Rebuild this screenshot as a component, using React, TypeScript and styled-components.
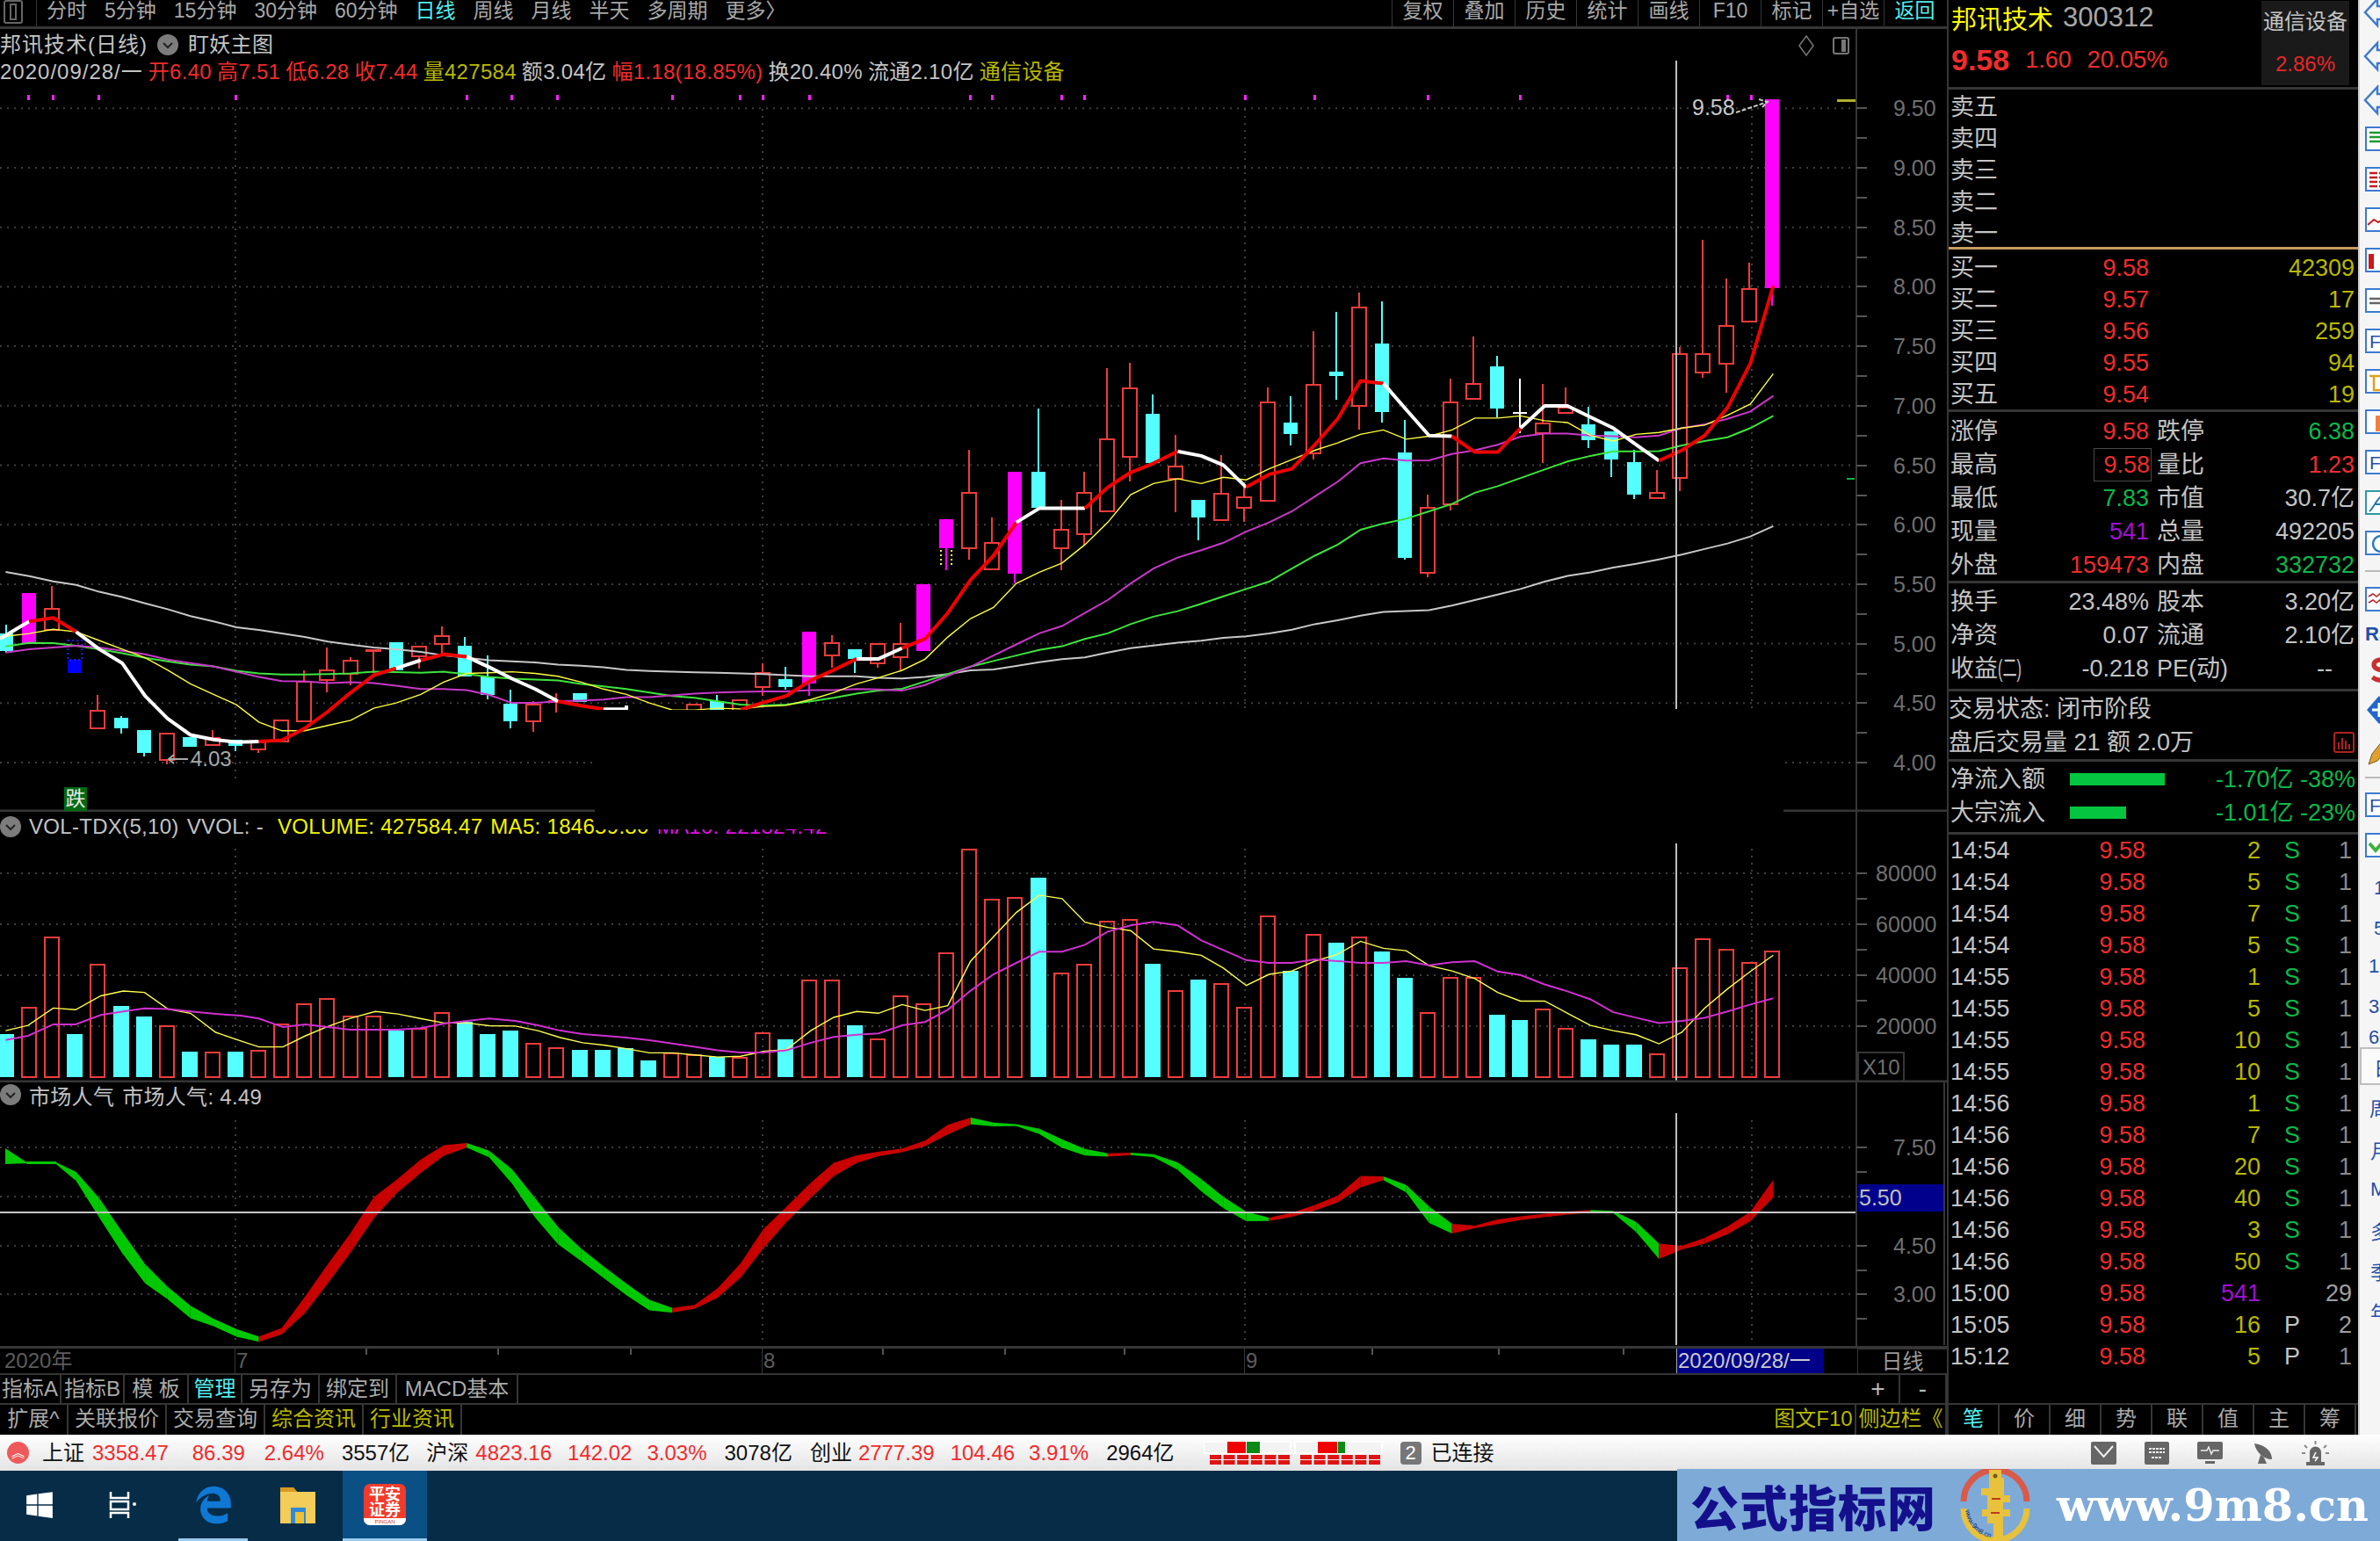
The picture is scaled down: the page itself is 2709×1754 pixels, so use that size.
import React from 'react';
import styled, { createGlobalStyle } from 'styled-components';
import { FaWindows, FaEdgeLegacy } from 'react-icons/fa';

const FONT = '"Liberation Sans", "Noto Sans CJK SC", sans-serif';
const RED = '#f02c2c';
const OLIVE = '#b8b800';
const GREEN = '#0cb84a';
const GREY = '#c4c4c4';
const LINE = '#363636';

const Global = createGlobalStyle`
  html, body { margin: 0; padding: 0; background: #000; overflow: hidden; }
  * { box-sizing: border-box; }
`;

const Screen = styled.div`
  width: 2709px; height: 1754px; display: flex; flex-direction: column;
  font-family: ${FONT}; background: #000; overflow: hidden;
`;
const Workspace = styled.div`display: flex; height: 1633px;`;
const ChartColumn = styled.div`width: 2216px; display: flex; flex-direction: column;`;

/* ---------- toolbar ---------- */
const Toolbar = styled.div`
  height: 33px; display: flex; align-items: flex-start; border-bottom: 3px solid ${LINE};
  font-size: 23px; line-height: 24px; color: #a8a8a8; white-space: nowrap;
`;
const ToolIconCell = styled.div`
  width: 42px; height: 30px; border-right: 1px solid ${LINE}; padding: 0 0 0 4px; display: flex; align-items: flex-start;
`;
const PeriodGroup = styled.div`display: flex; gap: 20px; padding-left: 11px;`;
const Period = styled.span<{ $on?: boolean }>`color: ${p => (p.$on ? '#55eeee' : '#a8a8a8')};`;
const ToolGroup = styled.div`margin-left: auto; display: flex; padding-right: 2px;`;
const ToolButton = styled.div<{ $on?: boolean }>`
  width: 70px; height: 30px; text-align: center; border-left: 1px solid ${LINE};
  color: ${p => (p.$on ? '#55eeee' : '#a8a8a8')};
`;

/* ---------- panes ---------- */
const Pane = styled.div<{ $h: number }>`position: relative; height: ${p => p.$h}px; flex: none;`;
const Canvas = styled.svg`display: block; width: 100%; height: 100%;`;
const ChartText = styled.text<{ $c?: string; $s?: number }>`
  font-family: ${FONT}; font-size: ${p => p.$s ?? 25}px; fill: ${p => p.$c ?? '#707070'};
`;
const HeaderStack = styled.div`
  position: absolute; left: 0; top: 2px; font-size: 24px; line-height: 31px; color: ${GREY}; white-space: nowrap;
`;
const HeaderRow = styled.div<{ $gap?: number }>`
  display: flex; align-items: center; gap: ${p => p.$gap ?? 6}px; height: 31px;
`;
const Seg = styled.span<{ $c?: string; $ls?: number }>`color: ${p => p.$c ?? GREY}; letter-spacing: ${p => p.$ls ?? 0.3}px;`;
const PaneTitle = styled.div<{ $top?: number }>`
  position: absolute; left: 0; top: ${p => p.$top ?? 3}px; height: 28px; display: flex; align-items: center; gap: 9px;
  font-size: 24px; color: ${GREY}; white-space: nowrap;
`;
const TitleMask = styled.div`
  position: absolute; left: 676px; top: 0; width: 310px; height: 17px; background: #000;
`;
const DropBadge = styled.div`
  position: absolute; left: 73px; top: 863px; width: 26px; height: 27px; background: #006a12; color: #e8e8e8;
  font-size: 23px; line-height: 27px; text-align: center;
`;

/* ---------- date axis and tabs ---------- */
const DateAxis = styled.div`
  position: relative; height: 31px; flex: none; border-top: 3px solid ${LINE}; display: flex; color: #5c5c5c;
  font-size: 24px; line-height: 27px;
`;
const AxisTicks = styled.svg`position: absolute; left: 0; top: 0; width: 2113px; height: 10px;`;
const DateCell = styled.div<{ $w: number; $bar?: boolean; $pad?: number }>`
  width: ${p => p.$w}px; padding-left: ${p => p.$pad ?? 1}px;
  border-right: 1px solid ${p => (p.$bar ? LINE : 'transparent')};
`;
const DateFlag = styled.div`
  width: 168px; background: #000088; color: #ccc; padding-left: 1px; font-size: 24px;
  border-left: 1px solid #aaa;
`;
const AxisCell = styled.div`
  width: 102px; margin-left: auto; text-align: center; color: #9a9a9a; border-left: 1px solid ${LINE}; border-top: 1px solid ${LINE};
`;
const TabRow = styled.div<{ $h: number }>`
  height: ${p => p.$h}px; flex: none; display: flex; border-top: 2px solid ${LINE}; font-size: 24px; line-height: 32px;
  white-space: nowrap;
`;
const Tab = styled.div<{ $w: number; $c?: string; $s?: number }>`
  width: ${p => p.$w}px; text-align: center; border-right: 2px solid ${LINE}; color: ${p => p.$c ?? '#aaa'};
  ${p => (p.$s ? `font-size: ${p.$s}px;` : '')}
`;
const TabSpacer = styled.div`flex: 1;`;

/* ---------- quote panel ---------- */
const QuotePanel = styled.div`
  width: 468px; border-left: 2px solid ${LINE}; display: flex; flex-direction: column;
  font-size: 27px; color: ${GREY}; white-space: nowrap; background: #000;
`;
const QuoteHead = styled.div`
  height: 102px; flex: none; border-bottom: 3px solid ${LINE}; display: flex; justify-content: space-between; padding: 1px 10px 0 3px;
`;
const HeadLeft = styled.div`display: flex; flex-direction: column;`;
const NameLine = styled.div`display: flex; align-items: center; gap: 11px; height: 38px; font-size: 29px; color: #ff0;`;
const CodeNum = styled.span`font-size: 31px; color: #a8a8a8;`;
const PriceLine = styled.div`display: flex; align-items: center; gap: 18px; height: 56px; margin-top: 1px; color: ${RED};`;
const BigPrice = styled.span`font-size: 34px; font-weight: 700;`;
const SectorBox = styled.div`
  width: 100px; height: 96px; background: #1a1a1a; display: flex; flex-direction: column; align-items: center;
  font-size: 24px; color: ${GREY}; padding-top: 4px; gap: 19px;
`;
const SectorPct = styled.span`color: #e42828;`;
const QuoteSection = styled.div<{ $h: number; $pad?: number; $accent?: boolean }>`
  height: ${p => p.$h}px; flex: none; padding-top: ${p => p.$pad ?? 2}px;
  border-bottom: ${p => (p.$accent ? '3px solid #c89a60' : `3px solid ${LINE}`)};
`;
const QuoteRow = styled.div<{ $h?: number }>`
  height: ${p => p.$h ?? 36}px; line-height: ${p => p.$h ?? 36}px; padding-left: 2px; display: grid;
  grid-template-columns: 108px 118px 109px 125px;
`;
const RowValue = styled.div<{ $c?: string; $box?: boolean; $inset?: number }>`
  position: relative; text-align: right; color: ${p => p.$c ?? GREY};
  padding-right: ${p => p.$inset ?? 0}px;
  ${p => (p.$box ? `outline: 1px solid #4a4a4a; outline-offset: -1px; margin-left: 55px; padding-right: 2px; margin-right: -3px;` : '')}
`;
const RowLabel2 = styled.div`padding-left: 9px;`;
const NarrowParen = styled.span`
  display: inline-block; width: 27px; white-space: nowrap;
  transform: scaleX(0.6); transform-origin: left center;
`;
const StatusLine = styled.div`height: 38px; line-height: 38px; padding-left: 0; display: flex; align-items: center; justify-content: space-between; padding-right: 4px;`;
const FlowRow = styled.div`height: 38px; line-height: 38px; padding-left: 2px; display: grid; grid-template-columns: 136px 1fr auto; align-items: center; padding-right: 3px;`;
const FlowBar = styled.div<{ $w: number }>`width: ${p => p.$w}px; height: 14px; background: #04c440;`;
const FlowValue = styled.div`color: ${GREEN};`;
const TradeRow = styled.div`
  height: 36px; line-height: 36px; padding-left: 2px; display: grid; grid-template-columns: 130px 92px 131px 60px 44px;
`;
const TradeVol = styled.div<{ $c: string }>`text-align: right; color: ${p => p.$c};`;
const TradeFlag = styled.div<{ $c: string }>`padding-left: 27px; color: ${p => p.$c};`;

/* ---------- tool rail ---------- */
const Rail = styled.div`
  width: 25px; flex: none; background: #f5f5f5; border-left: 2px solid #cfcfcf; overflow: hidden; display: flex; flex-direction: column;
`;
const RailSlot = styled.div<{ $h: number; $on?: boolean; $pad?: number }>`
  height: ${p => p.$h}px; flex: none; display: flex; align-items: center; padding-left: ${p => p.$pad ?? 6}px; width: 60px;
  font-size: 22px; color: #1f4fa8; white-space: nowrap;
  ${p => (p.$on ? 'background:#fafafa; border: 2px solid #bdbdbd; border-right: none;' : '')}
`;
const RailBox = styled.div<{ $c?: string }>`
  width: 28px; height: 28px; flex: none; border: 2px solid ${p => p.$c ?? '#3c7ad0'}; background: #fff;
  font-size: 22px; line-height: 24px; color: #1f4fa8;
`;
const RailRule = styled.div`width: 40px; height: 2px; background: #bbb;`;

/* ---------- status and task bars ---------- */
const StatusBar = styled.div`
  height: 41px; flex: none; display: flex; align-items: center; padding-left: 8px; font-size: 24px; color: #111;
  background: linear-gradient(#ffffff, #e4e4e4); white-space: nowrap; line-height: 36px;
`;
const StatusItem = styled.span<{ $ml: number; $c?: string }>`margin-left: ${p => p.$ml}px; color: ${p => p.$c ?? '#111'};`;
const StatusDot = styled.div`
  width: 25px; height: 25px; border-radius: 50%; background: #ee5a5a; color: #fff; font-size: 15px; line-height: 25px; text-align: center;
`;
const LineBadge = styled.div`
  margin-left: 20px; width: 24px; height: 26px; border-radius: 4px; background: #777; color: #fff; text-align: center; line-height: 26px; font-size: 22px;
`;
const TrayGroup = styled.div`margin-left: auto; display: flex; align-items: center; gap: 32px; padding-right: 58px; color: #666;`;
const Taskbar = styled.div`height: 80px; flex: none; display: flex; background: #062c47; position: relative;`;
const TaskSlot = styled.div<{ $w: number; $on?: boolean; $ul?: boolean; $ml?: number }>`
  width: ${p => p.$w}px; margin-left: ${p => p.$ml ?? 0}px; display: flex; align-items: center; justify-content: center; color: #fff;
  background: ${p => (p.$on ? '#0a5085' : 'transparent')};
  border-bottom: 3px solid ${p => (p.$ul ? '#9ccbee' : 'transparent')};
`;
const AppIcon = styled.div`
  width: 48px; height: 47px; border-radius: 7px; background: #f23a2c; color: #fff; font-size: 18px; line-height: 18px; font-weight: 700;
  text-align: center; padding-top: 3px; overflow: hidden; position: relative;
`;
const AppFoot = styled.div`
  position: absolute; left: 0; right: 0; bottom: 0; height: 8px; background: #fff; color: #c33; font-size: 6px; line-height: 8px; font-weight: 400;
`;
const Watermark = styled.div`
  margin-left: auto; margin-top: -2px; width: 800px; height: 82px; background: #7eaad8; display: flex; align-items: center;
  padding-left: 15px; position: relative; z-index: 2;
`;
const WatermarkCn = styled.div`
  font-family: "Noto Sans CJK SC", sans-serif; font-weight: 900; font-size: 55px; line-height: 78px; color: #14108c; letter-spacing: 1px; white-space: nowrap; width: 285px;
`;
const WatermarkUrl = styled.div`
  font-family: "DejaVu Serif", serif; font-weight: 700; font-size: 51px; color: #fff; white-space: nowrap; margin-left: 30px;
`;

/* ---------- chart data: real screen pixels ---------- */
const X = (i: number) => 7 + 26.1 * i;
type P = number[];
const z9 = (a: P[]) => a.map(([x, y]) => [x / 1.568, 640 + y / 2.529]);
const z10 = (a: P[]) => a.map(([x, y]) => [1000 + x / 1.307, 300 + y / 2.376]);
const zv = (a: P[]) => a.map(([x, y]) => [x / 1.568, 920 + y / 2.529]);
const zw = (a: P[]) => a.map(([x, y]) => [1000 + x / 1.307, 920 + y / 2.529]);
const ptsOf = (a: P[]) => a.map(p => `${p[0].toFixed(1)},${p[1].toFixed(1)}`).join(' ');

type Candle = [string, number, number, number?, number?];
const CANDLES: Candle[] = [
  ['c', 721, 741, 711, 743], ['m', 675, 733], ['r', 693, 717, 667, 717], ['b', 751, 766], ['r', 809, 829, 791, 829],
  ['c', 817, 829, 815, 835], ['c', 831, 857, 831, 861], ['r', 835, 865, 835, 870], ['c', 839, 850], ['r', 840, 848, 831, 848],
  ['c', 842, 849, 842, 855], ['r', 845, 853, 845, 857], ['r', 820, 844], ['r', 776, 821, 763, 821], ['r', 763, 774, 737, 788],
  ['r', 752, 767, 748, 780], ['r', 740, 741, 740, 766], ['c', 731, 763], ['r', 736, 747, 736, 761], ['r', 724, 733, 713, 744],
  ['c', 735, 770, 725, 770], ['c', 770, 791, 746, 796], ['c', 801, 821, 785, 829], ['r', 802, 821, 798, 833], ['r', 798, 799, 789, 811],
  ['c', 789, 799], ['n', 0, 0], ['n', 0, 0], ['n', 0, 0], ['n', 0, 0], ['r', 802, 812], ['c', 798, 808, 791, 808], ['r', 797, 812],
  ['r', 766, 782, 755, 792], ['c', 773, 782, 759, 785], ['m', 719, 778, 719, 792], ['r', 732, 746, 723, 760], ['c', 739, 750, 739, 766],
  ['r', 733, 755, 733, 760], ['r', 733, 748, 709, 763], ['m', 665, 741], ['m', 591, 624, 591, 649], ['r', 561, 624, 512, 637],
  ['r', 618, 648, 589, 648], ['m', 537, 653, 537, 664], ['c', 537, 578, 465, 578], ['r', 603, 624, 569, 649], ['r', 561, 608, 537, 620],
  ['r', 500, 582, 419, 582], ['r', 442, 520, 413, 548], ['c', 471, 527, 449, 527], ['r', 531, 545, 495, 583], ['c', 569, 589, 569, 615],
  ['r', 562, 592, 518, 592], ['r', 566, 578, 552, 594], ['r', 458, 570, 441, 570], ['c', 481, 494, 451, 507], ['r', 438, 516, 377, 523],
  ['c', 423, 428, 355, 455], ['r', 350, 462, 333, 489], ['c', 391, 469, 343, 481], ['c', 515, 635, 478, 637], ['r', 578, 652, 563, 657],
  ['r', 458, 574, 431, 581], ['r', 437, 454, 383, 454], ['c', 417, 465, 405, 475], ['w', 470, 471, 431, 493], ['r', 482, 493, 437, 527],
  ['r', 464, 470, 441, 470], ['c', 483, 501, 463, 510], ['c', 491, 523, 491, 543], ['c', 526, 563, 512, 568], ['r', 561, 567, 535, 568],
  ['r', 403, 544, 395, 559], ['r', 403, 424, 273, 430], ['r', 371, 414, 317, 447], ['r', 329, 366, 299, 366], ['m', 113, 328, 113, 348],
];
const VOL_TOPS: [string, number][] = ([
  ['c', 650], ['r', 575], ['r', 373], ['c', 650], ['r', 450], ['c', 570], ['c', 600], ['r', 627], ['c', 700], ['r', 702], ['c', 700], ['r', 697],
  ['r', 622], ['r', 565], ['r', 550], ['r', 600], ['r', 600], ['c', 640], ['r', 635], ['r', 590], ['c', 615], ['c', 650], ['c', 640], ['r', 677],
  ['r', 690], ['c', 695], ['c', 695], ['c', 690], ['c', 725], ['r', 705], ['r', 710], ['c', 715], ['r', 717], ['r', 647], ['c', 665], ['r', 495],
  ['r', 495], ['c', 625], ['r', 665], ['r', 540], ['r', 565], ['r', 418], ['r', 120], ['r', 262], ['r', 257], ['c', 200], ['r', 475], ['r', 450],
  ['r', 327], ['r', 322], ['c', 448], ['r', 525], ['c', 493], ['r', 505], ['r', 575], ['r', 312], ['c', 468], ['r', 363], ['c', 387], ['r', 373],
  ['c', 412], ['c', 488], ['r', 590], ['r', 488], ['r', 488], ['c', 595], ['c', 610], ['r', 580], ['r', 636], ['c', 665], ['c', 680], ['c', 680],
  ['r', 707], ['r', 460], ['r', 378], ['r', 408], ['r', 444], ['r', 413],
] as [string, number][]);

const MAIN_LINES: { c: string; w: number; p: number[][] }[] = [
  { c: '#c8c8c8', w: 2, p: [...z9([[10,28],[52,40],[95,55],[136,65],[177,85],[218,100],[259,118],[299,135],[340,155],[381,170],[422,187],[462,195],[503,205],[544,215],[585,228],[626,237],[667,245],[707,250],[751,258],[792,268],[833,275],[873,282],[914,285],[955,288],[996,295],[1037,298],[1077,302],[1118,310],[1159,313],[1200,315],[1240,317],[1281,318],[1322,320],[1362,322],[1403,325],[1447,328],[1488,328],[1529,328]]), ...z10([[0,1120],[35,1122],[69,1118],[103,1110],[137,1100],[171,1098],[205,1088],[239,1078],[273,1070],[307,1065],[341,1052],[375,1040],[409,1033],[445,1025],[480,1020],[513,1012],[547,1008],[581,1000],[615,990],[649,975],[683,965],[717,952],[751,942],[785,940],[819,937],[853,925],[887,910],[921,895],[955,880],[991,860],[1025,845],[1059,835],[1093,822],[1127,812],[1161,800],[1195,787],[1229,772],[1263,757],[1297,738],[1331,710]])] },
  { c: '#3ee43e', w: 2, p: [...z9([[10,242],[52,232],[95,233],[136,240],[177,250],[218,262],[259,275],[299,285],[340,295],[381,300],[422,312],[462,320],[503,323],[544,323],[585,322],[626,320],[667,315],[707,316],[751,318],[792,315],[833,322],[873,330],[914,335],[955,338],[996,340],[1037,350],[1077,357],[1118,365],[1159,375],[1200,385],[1240,390],[1281,400],[1322,410],[1362,412],[1403,410],[1447,400],[1488,390],[1529,378]]), ...z10([[0,1155],[35,1150],[69,1130],[103,1110],[137,1090],[171,1075],[205,1060],[239,1045],[273,1035],[307,1015],[341,1000],[375,975],[409,955],[445,940],[480,920],[513,900],[547,880],[581,860],[615,825],[649,790],[683,760],[717,720],[751,703],[785,690],[819,670],[853,650],[887,620],[921,602],[955,580],[991,557],[1025,535],[1059,520],[1093,508],[1127,508],[1161,507],[1195,492],[1229,480],[1263,470],[1297,445],[1331,412]])] },
  { c: '#c838c8', w: 2, p: [...z9([[10,260],[52,250],[95,245],[136,240],[177,245],[218,255],[259,265],[299,280],[340,290],[381,300],[422,315],[462,330],[503,342],[544,343],[585,348],[626,345],[667,348],[707,355],[751,365],[792,365],[833,368],[873,382],[914,405],[955,405],[996,400],[1037,398],[1077,395],[1118,388],[1159,388],[1200,383],[1240,378],[1281,375],[1322,373],[1362,372],[1403,372],[1447,368],[1488,368],[1529,365]]), ...z10([[0,1152],[35,1155],[69,1140],[103,1115],[137,1090],[171,1060],[205,1030],[239,1000],[273,980],[307,945],[341,910],[375,865],[409,825],[445,795],[480,775],[513,755],[547,725],[581,700],[615,670],[649,630],[683,590],[717,540],[751,527],[785,533],[819,532],[853,515],[887,505],[921,490],[955,468],[991,460],[1025,460],[1059,465],[1093,467],[1127,470],[1161,465],[1195,445],[1229,435],[1263,420],[1297,400],[1331,358]])] },
  { c: '#ffff40', w: 1.4, p: [...z9([[0,215],[52,205],[95,193],[136,200],[177,225],[218,250],[259,275],[299,310],[340,350],[381,380],[422,410],[462,460],[503,485],[544,485],[585,470],[626,455],[667,420],[707,405],[751,380],[792,345],[833,320],[873,318],[914,315],[955,320],[996,328],[1037,345],[1077,365],[1118,380],[1159,405],[1200,425],[1240,425],[1281,420],[1322,422],[1362,415],[1403,412],[1447,395],[1488,375],[1529,350]]), ...z10([[0,1120],[35,1100],[69,1070],[103,1010],[137,960],[171,930],[205,865],[239,835],[273,810],[307,760],[341,700],[375,625],[409,595],[445,582],[480,595],[513,578],[547,585],[581,555],[615,530],[649,505],[683,485],[717,462],[751,450],[785,475],[819,467],[853,450],[887,418],[921,418],[955,412],[991,425],[1025,430],[1059,465],[1093,480],[1127,462],[1161,457],[1195,445],[1229,437],[1263,410],[1297,380],[1331,298]])] },
];
const W = '#ffffff';
const R = '#f00000';
const FAST_LINE: { c: string; p: number[][] }[] = [
  { c: W, p: z9([[0,220],[52,170]]) },
  { c: R, p: z9([[52,170],[95,160],[136,200]]) },
  { c: W, p: z9([[136,200],[177,250],[218,290],[259,385],[299,450],[340,497],[381,510],[422,518],[462,516]]) },
  { c: R, p: z9([[462,516],[503,512],[544,478],[585,430],[626,375],[667,325],[707,305]]) },
  { c: W, p: z9([[707,305],[751,282]]) },
  { c: R, p: z9([[751,282],[792,265],[833,272]]) },
  { c: W, p: z9([[833,272],[873,302],[914,335],[955,365],[996,400]]) },
  { c: R, p: z9([[996,400],[1037,413],[1077,423]]) },
  { c: W, p: z9([[1077,423],[1118,423],[1118,412]]) },
  { c: R, p: z9([[1322,424],[1362,404],[1403,385],[1447,340],[1488,310],[1529,278]]) },
  { c: W, p: [...z9([[1529,278],[1568,278]]), ...z10([[35,1040]])] },
  { c: R, p: z10([[35,1040],[69,1015],[103,945],[137,855],[171,790],[205,700]]) },
  { c: W, p: z10([[205,700],[239,662],[273,662],[307,662]]) },
  { c: R, p: z10([[307,662],[341,605],[375,565],[409,540],[445,508]]) },
  { c: W, p: z10([[445,508],[480,520],[513,545],[547,605]]) },
  { c: R, p: z10([[547,605],[581,570],[615,555],[649,490],[683,420],[717,317],[751,324]]) },
  { c: W, p: z10([[751,324],[785,395],[819,465],[853,467]]) },
  { c: R, p: z10([[853,467],[887,510],[921,510],[955,445]]) },
  { c: W, p: z10([[955,445],[991,385],[1025,385],[1059,415],[1093,445],[1127,490],[1161,533]]) },
  { c: R, p: z10([[1161,533],[1195,505],[1229,465],[1263,390],[1297,270],[1331,60]]) },
];
const VOL_FAST = [...zv([[10,640],[50,625],[95,575],[135,580],[180,540],[220,526],[258,530],[300,578],[340,590],[385,645],[430,670],[462,687],[505,687],[545,655],[585,628],[625,605],[670,585],[710,592],[750,605],[792,618],[833,618],[873,626],[920,627],[960,640],[1000,660],[1040,675],[1080,682],[1118,692],[1159,704],[1200,704],[1240,710],[1281,716],[1322,714],[1362,700],[1403,695],[1447,640],[1488,602],[1529,585]]), ...zw([[0,590],[35,565],[69,582],[103,568],[137,440],[171,370],[205,300],[239,250],[273,260],[307,328],[341,343],[375,352],[409,405],[445,413],[480,423],[513,460],[547,510],[581,478],[615,468],[649,440],[683,420],[717,383],[751,403],[785,410],[819,453],[853,468],[887,490],[921,530],[955,555],[991,555],[1025,590],[1059,625],[1093,640],[1127,652],[1161,678],[1195,645],[1229,575],[1263,520],[1297,470],[1331,423]])];
const VOL_SLOW = [...zv([[10,667],[50,655],[95,622],[135,622],[180,595],[220,585],[258,576],[300,578],[340,585],[385,592],[430,597],[462,605],[505,630],[545,622],[585,630],[625,637],[670,637],[710,637],[750,633],[792,620],[833,612],[873,605],[920,612],[960,625],[1000,640],[1040,650],[1080,655],[1118,660],[1159,668],[1200,677],[1240,687],[1281,697],[1322,703],[1362,703],[1403,697],[1447,675],[1488,658],[1529,652]]), ...zw([[0,648],[35,625],[69,615],[103,580],[137,525],[171,478],[205,445],[239,413],[273,413],[307,393],[341,355],[375,337],[409,327],[445,337],[480,380],[513,408],[547,437],[581,445],[615,445],[649,435],[683,440],[717,445],[751,445],[785,440],[819,452],[853,443],[887,440],[921,470],[955,480],[991,507],[1025,527],[1059,550],[1093,587],[1127,603],[1161,618],[1195,612],[1229,603],[1263,585],[1297,565],[1331,547]])];
const MOOD = [...zv([[100,1022],[136,1060],[177,1150],[218,1250],[259,1340],[299,1395],[340,1450],[381,1480],[422,1510],[462,1528],[503,1505],[544,1430],[585,1340],[626,1250],[667,1150],[707,1090],[751,1030],[792,985],[833,970],[873,995],[914,1060],[955,1150],[996,1230],[1037,1285],[1077,1335],[1118,1385],[1159,1430],[1200,1445],[1240,1435],[1281,1395],[1322,1330],[1362,1240],[1403,1170],[1447,1100],[1488,1040],[1529,1010]]), ...zw([[0,995],[35,985],[69,965],[103,925],[137,900],[171,910],[205,912],[239,930],[273,965],[307,990],[341,998],[375,995],[409,1000],[445,1030],[480,1085],[513,1135],[547,1175],[581,1183],[615,1170],[649,1150],[683,1125],[717,1075],[751,1065],[785,1095],[819,1170],[853,1210],[887,1205],[921,1190],[955,1180],[991,1172],[1025,1165],[1059,1160],[1093,1162],[1127,1205],[1161,1275],[1195,1265],[1229,1245],[1263,1215],[1297,1175],[1331,1095]])];

const PRICE_TICKS = ['9.50','9.00','8.50','8.00','7.50','7.00','6.50','6.00','5.50','5.00','4.50','4.00'];
const priceY = (p: number) => 868 - (p - 4) * 135.4;
const VERTICALS = [268, 868, 1417, 1994];
const DATE_TICKS = [416, 566, 717, 1004, 1143, 1279, 1561, 1705, 1847];
const SIGNAL_X = [32,60,112,268,531,582,634,765,842,868,921,1104,1129,1208,1234,1417,1496,1625,1730,1966,1993];
const GRID = '#3e3e3e';

const HDots = ({ y, x1 = 0, x2 = 2113 }: { y: number; x1?: number; x2?: number }) => (
  <line x1={x1} x2={x2} y1={y} y2={y} stroke={GRID} strokeWidth={2} strokeDasharray="2 6" />
);
const VDots = ({ x, y1, y2 }: { x: number; y1: number; y2: number }) => (
  <line x1={x} x2={x} y1={y1} y2={y2} stroke={GRID} strokeWidth={2} strokeDasharray="2 6" />
);
const CandleMark = ({ i, d }: { i: number; d: Candle }) => {
  const [t, top, bot, hi, lo] = d;
  if (t === 'n') return null;
  const x = X(i);
  const color = t === 'r' ? '#ee3c3c' : t === 'c' ? '#55ffff' : t === 'm' ? '#ff00ff' : t === 'b' ? '#0000ff' : '#ffffff';
  const hollow = t === 'r';
  return (
    <g shapeRendering="crispEdges">
      {hi !== undefined && <line x1={x} x2={x} y1={hi} y2={top} stroke={color} strokeWidth={2} />}
      {lo !== undefined && <line x1={x} x2={x} y1={bot} y2={lo} stroke={color} strokeWidth={2} />}
      {t === 'w' ? (
        <line x1={x - 8} x2={x + 8} y1={top} y2={top} stroke={color} strokeWidth={2} />
      ) : (
        <rect x={x - 8} y={top} width={16} height={bot - top} fill={hollow ? '#000' : color} stroke={hollow ? color : 'none'} strokeWidth={2} />
      )}
    </g>
  );
};
const Crosshair = ({ y1, y2 }: { y1: number; y2: number }) => (
  <line x1={1908} x2={1908} y1={y1} y2={y2} stroke="#c0c0c0" strokeWidth={2} />
);
const AxisFrame = ({ y1, y2, ticks }: { y1: number; y2: number; ticks: number[] }) => (
  <g shapeRendering="crispEdges">
    <line x1={2113} x2={2113} y1={y1} y2={y2} stroke={LINE} strokeWidth={2} />
    {ticks.map(t => <line key={t} x1={2113} x2={2125} y1={t} y2={t} stroke="#555" strokeWidth={2} />)}
  </g>
);

const MainChart = () => {
  const ticks = PRICE_TICKS.flatMap(p => [priceY(+p), priceY(+p) + 34]).filter(y => y < 900);
  return (
    <Canvas viewBox="0 33 2216 891">
      {PRICE_TICKS.map(p => <HDots key={p} y={priceY(+p)} />)}
      {VERTICALS.map(x => <VDots key={x} x={x} y1={124} y2={890} />)}
      {SIGNAL_X.map(x => <rect key={x} x={x - 1} y={108} width={3} height={6} fill="#ff20ff" />)}
      {CANDLES.map((d, i) => <CandleMark key={i} i={i} d={d} />)}
      <rect x={X(3) - 8} y={729} width={16} height={22} fill="none" stroke="#2020ff" strokeWidth={2} strokeDasharray="2 3" />
      <line x1={X(41) - 6} x2={X(41) - 6} y1={626} y2={645} stroke="#ffff40" strokeWidth={2} strokeDasharray="2 3" />
      <line x1={X(41) + 6} x2={X(41) + 6} y1={626} y2={645} stroke="#ffff40" strokeWidth={2} strokeDasharray="2 3" />
      {MAIN_LINES.map(l => <polyline key={l.c} points={ptsOf(l.p)} fill="none" stroke={l.c} strokeWidth={l.w} />)}
      {FAST_LINE.map((l, i) => <polyline key={i} points={ptsOf(l.p)} fill="none" stroke={l.c} strokeWidth={4} strokeLinejoin="round" />)}
      <rect x={677} y={808} width={1353} height={116} fill="#000" />
      <Crosshair y1={69} y2={807} />
      <ChartText x={1926} y={131} $c="#c8c8c8">9.58</ChartText>
      <path d="M1976 128 L2012 116 M2002 113 L2012 116 L2005 123" stroke="#c8c8c8" strokeWidth={2} fill="none" strokeDasharray="5 2" />
      <ChartText x={217} y={872} $c="#a8a8a8" $s={24}>4.03</ChartText>
      <path d="M214 864 L192 864 M198 859 L192 864 L198 869" stroke="#a8a8a8" strokeWidth={2} fill="none" />
      <rect x={2091} y={113} width={22} height={3} fill="#b0b030" />
      <rect x={2102} y={544} width={9} height={2} fill="#10b040" />
      <path d="M2056 41 L2064 52 L2056 63 L2048 52 Z" fill="none" stroke="#777" strokeWidth={1.5} />
      <rect x={2087} y={43} width={17} height={18} rx={2} fill="none" stroke="#777" strokeWidth={2} />
      <rect x={2096} y={45} width={5} height={14} fill="#777" />
      <AxisFrame y1={33} y2={924} ticks={ticks} />
      {PRICE_TICKS.map(p => <ChartText key={p} x={2155} y={priceY(+p) + 9}>{p}</ChartText>)}
      <line x1={0} x2={677} y1={923} y2={923} stroke={LINE} strokeWidth={3} />
      <line x1={2030} x2={2216} y1={923} y2={923} stroke={LINE} strokeWidth={3} />
    </Canvas>
  );
};

const VolumeChart = () => {
  const base = 1226;
  return (
    <Canvas viewBox="0 924 2216 308">
      {[994, 1052, 1110, 1168].map(y => <HDots key={y} y={y} />)}
      {VERTICALS.map(x => <VDots key={x} x={x} y1={966} y2={1226} />)}
      <g shapeRendering="crispEdges">
        {VOL_TOPS.map(([t, top], i) => {
          const y = 920 + top / 2.529;
          const x = X(i);
          return t === 'c'
            ? <rect key={i} x={x - 9} y={y} width={18} height={base - y} fill="#55ffff" />
            : <rect key={i} x={x - 8} y={y} width={16} height={base - y} fill="none" stroke="#ee3c3c" strokeWidth={2} />;
        })}
      </g>
      <polyline points={ptsOf(VOL_FAST)} fill="none" stroke="#ffff50" strokeWidth={1.4} />
      <polyline points={ptsOf(VOL_SLOW)} fill="none" stroke="#d030d0" strokeWidth={2} />
      <Crosshair y1={960} y2={1231} />
      <AxisFrame y1={924} y2={1232} ticks={[994, 1023, 1052, 1081, 1110, 1139, 1168]} />
      {[[80000, 994], [60000, 1052], [40000, 1110], [20000, 1168]].map(([v, y]) => (
        <ChartText key={v} x={2135} y={y + 9}>{v}</ChartText>
      ))}
      <rect x={2115} y={1198} width={52} height={33} fill="none" stroke={LINE} strokeWidth={2} />
      <ChartText x={2120} y={1223} $s={24}>X10</ChartText>
      <line x1={0} x2={2216} y1={1231} y2={1231} stroke={LINE} strokeWidth={3} />
    </Canvas>
  );
};

const MoodChart = () => {
  const t = MOOD.map((p, j) => {
    const a = j > 0 ? Math.abs(p[1] - MOOD[j - 1][1]) : 0;
    return 0.56 * a + 2;
  });
  return (
    <Canvas viewBox="0 1232 2216 300">
      {[1306, 1362, 1418, 1473].map(y => <HDots key={y} y={y} />)}
      {VERTICALS.map(x => <VDots key={x} x={x} y1={1275} y2={1531} />)}
      <polygon points="6,1307 6,1325 32,1324" fill="#00c800" />
      <rect x={30} y={1322} width={34} height={3} fill="#00c800" />
      {MOOD.slice(1).map((q, j) => {
        const p = MOOD[j];
        const up = q[1] < p[1];
        const a = t[j];
        const b = t[j + 1];
        return (
          <polygon
            key={j}
            fill={up ? '#c80000' : '#00c800'}
            points={`${p[0]},${p[1] - a / 2} ${q[0]},${q[1] - b / 2} ${q[0]},${q[1] + b / 2} ${p[0]},${p[1] + a / 2}`}
          />
        );
      })}
      <line x1={0} x2={2113} y1={1380} y2={1380} stroke="#c8c8c8" strokeWidth={2} />
      <Crosshair y1={1267} y2={1531} />
      <AxisFrame y1={1232} y2={1532} ticks={[1306, 1334, 1362, 1418, 1446, 1473, 1501]} />
      <rect x={2115} y={1348} width={98} height={31} fill="#00008c" />
      <ChartText x={2116} y={1372} $c="#c0c0c0">5.50</ChartText>
      {[['7.50', 1306], ['4.50', 1418], ['3.00', 1473]].map(([v, y]) => (
        <ChartText key={v as string} x={2155} y={(y as number) + 9}>{v}</ChartText>
      ))}
      <line x1={2213} x2={2213} y1={1232} y2={1531} stroke={LINE} strokeWidth={2} />
    </Canvas>
  );
};

/* ---------- small drawings ---------- */
const Chevron = () => (
  <svg width="24" height="24" viewBox="0 0 24 24"><circle cx="12" cy="12" r="12" fill="#7c7c7c" /><path d="M7 10 L12 15 L17 10" fill="none" stroke="#222" strokeWidth="2" /></svg>
);
const PanelGlyph = () => (
  <svg width="22" height="28" viewBox="0 0 22 28"><rect x="1" y="1" width="20" height="25" rx="2" fill="none" stroke="#666" strokeWidth="2" /><rect x="8" y="5" width="6" height="17" fill="none" stroke="#666" strokeWidth="2" /></svg>
);
const BarsBadge = () => (
  <svg width="24" height="24" viewBox="0 0 24 24"><rect x="1" y="1" width="22" height="22" rx="2" fill="none" stroke="#b02020" strokeWidth="2" /><path d="M6 20V12M10 20V7M14 20V10M18 20V14" stroke="#b02020" strokeWidth="2" /></svg>
);
const MiniBlocks = () => {
  const dashes = [0, 1].flatMap(r => [0, 1].flatMap(g => [0, 1, 2, 3, 4, 5].map(k => (
    <rect key={`${r}${g}${k}`} x={7 + g * 103 + k * 15.6} y={17 + r * 6} width={13} height={5} fill="#e01414" />
  ))));
  return (
    <svg width="204" height="30" viewBox="0 0 204 30" style={{ marginLeft: 33 }}>
      <rect x="0" y="2" width="99" height="13" fill="#f3f3f3" stroke="#fff" strokeWidth="2" />
      <rect x="104" y="2" width="99" height="13" fill="#f3f3f3" stroke="#fff" strokeWidth="2" />
      <rect x="27" y="2" width="21" height="13" fill="#f00000" />
      <rect x="49" y="2" width="15" height="13" fill="#0a8a14" />
      <rect x="130" y="2" width="22" height="13" fill="#f00000" />
      <rect x="153" y="2" width="8" height="13" fill="#0a8a14" />
      {dashes}
    </svg>
  );
};
const TrayIcons = () => (
  <TrayGroup>
    <svg width="29" height="26" viewBox="0 0 29 26"><rect width="29" height="26" rx="2" fill="#666" /><path d="M4 5 L14.5 17 L25 5" fill="none" stroke="#eee" strokeWidth="2" /></svg>
    <svg width="28" height="26" viewBox="0 0 28 26"><rect width="28" height="26" rx="2" fill="#666" /><path d="M5 8H23M5 12H23M8 18H20" stroke="#eee" strokeWidth="2" strokeDasharray="3 1" /></svg>
    <svg width="29" height="26" viewBox="0 0 29 26"><rect width="29" height="20" rx="2" fill="#666" /><rect x="9" y="22" width="11" height="3" fill="#666" /><path d="M4 10H11L13 6L16 14L18 10H25" fill="none" stroke="#eee" strokeWidth="1.5" /></svg>
    <svg width="26" height="26" viewBox="0 0 26 26"><path d="M4 2 C18 4 24 12 24 20 C14 20 6 12 4 2Z" fill="#666" /><path d="M11 15 L8 25 H18 L15 18Z" fill="#666" /></svg>
    <svg width="31" height="28" viewBox="0 0 31 28"><path d="M9 24V13a6.5 6.5 0 0 1 13 0V24Z" fill="#666" /><rect x="5" y="24" width="21" height="4" fill="#666" /><path d="M16 13L13 19H18L15 23" stroke="#fff" strokeWidth="1.5" fill="none" /><path d="M15.5 0V4M3 5L6 8M28 5L25 8M0 14H4M27 14H31" stroke="#888" strokeWidth="2" /></svg>
  </TrayGroup>
);
const Folder = () => (
  <svg width="42" height="46" viewBox="0 0 42 46">
    <path d="M1 3 H16 L20 8 H41 V44 H1Z" fill="#f3cc5a" /><path d="M1 3 H16 L20 8 H1Z" fill="#d89a20" />
    <rect x="13" y="26" width="17" height="18" fill="#2f8ad8" /><rect x="18" y="31" width="10" height="13" fill="#f0c030" />
  </svg>
);
const TaskView = () => (
  <svg width="32" height="32" viewBox="0 0 32 32" fill="none" stroke="#fff" strokeWidth="2.5">
    <path d="M2 1V8H22V1" /><rect x="2" y="12" width="20" height="9" /><path d="M2 31V25H22V31" /><circle cx="29" cy="15" r="2" fill="#fff" stroke="none" />
  </svg>
);
const BrandLogo = () => (
  <svg width="80" height="82" viewBox="0 0 80 82" style={{ marginLeft: 22, flex: 'none' }}>
    <defs><path id="brandArc" d="M6 47 A36 36 0 0 0 40 79" /></defs>
    <path d="M4 37 A36 36 0 0 1 76 37" fill="none" stroke="#d95a48" strokeWidth="7" />
    <path d="M4 45 A36 36 0 0 0 76 45" fill="none" stroke="#e8c23c" strokeWidth="7" />
    <path d="M33 1 H47 V10 H50 V30 H57 V38 H49 V46 H57 V54 H49 V80 H38 V62 H31 V54 H25 V46 H31 V30 H24 V22 H33Z" fill="#e8c23c" />
    <circle cx="40" cy="8" r="2.5" fill="#7a5a20" />
    <path d="M36 34H46M35 50H45" stroke="#c03a20" strokeWidth="2" />
    <text fontSize="8" fill="#16306a" fontFamily="Liberation Sans, sans-serif"><textPath href="#brandArc">www.9m8.cn</textPath></text>
  </svg>
);

/* ---------- rail ---------- */
const Arrow = () => (
  <svg width="28" height="36" viewBox="0 0 28 36" fill="none" stroke="#3c7ad0" strokeWidth="2.5"><path d="M2 18 L16 3 V11 H30 V26 H16 V33Z" /></svg>
);
const RailArrows = styled.div`display: flex; flex-direction: column; gap: 14px; margin-top: -8px; margin-left: -2px;`;
const Spark = ({ kind }: { kind: number }) => {
  const list: React.ReactNode[] = [
    <path key="a" d="M3 5H20M3 10H20M3 15H20" stroke="#1a9a30" strokeWidth="2.5" />,
    <path key="b" d="M3 5H20M3 10H20M3 15H20M3 20H20" stroke="#c02020" strokeWidth="2.5" strokeDasharray="9 2" />,
    <path key="c" d="M1 18 L8 12 L13 15 L22 9" stroke="#d01818" fill="none" strokeWidth="2" />,
    <path key="d" d="M5 5V22" stroke="#d01818" strokeWidth="6" />,
    <path key="e" d="M3 10H20M3 15H20" stroke="#666" strokeWidth="2.5" />,
    <text key="f" x="3" y="20" fontSize="21" fill="#1f4fa8" fontFamily="Liberation Sans, sans-serif">Fi</text>,
    <path key="g" d="M3 6H18M8 6V22H22" stroke="#e0a020" strokeWidth="2.5" fill="none" />,
    <rect key="h" x="10" y="5" width="16" height="18" fill="#f08040" />,
    <path key="i" d="M3 22C8 18 12 6 18 4M10 14H22" stroke="#2878b0" strokeWidth="2" fill="none" />,
    <circle key="j" cx="16" cy="13" r="9" fill="none" stroke="#2878c8" strokeWidth="2.5" />,
    <path key="k" d="M2 9L7 6L11 9L16 5L22 8M2 16L7 13L11 16L16 12L22 15" stroke="#c02020" fill="none" strokeWidth="1.5" />,
    <path key="l" d="M3 10L10 18L22 4" stroke="#40b040" fill="none" strokeWidth="4" />,
  ];
  return <svg width="24" height="24" viewBox="0 0 24 24">{list[kind]}</svg>;
};
const RAIL_TEXT = [
  ['1分', 46, 16], ['5分', 46, 16], ['15', 46, 10], ['30', 46, 10], ['60', 23, 10],
] as [string, number, number][];
const RailSide = () => (
  <Rail>
    <RailSlot $h={135}><RailArrows><Arrow /><Arrow /><Arrow /></RailArrows></RailSlot>
    {[0, 1, 2, 3, 4, 5, 6, 7, 5].map((k, i) => (
      <RailSlot key={i} $h={46}><RailBox><Spark kind={k} /></RailBox></RailSlot>
    ))}
    <RailSlot $h={46}><RailBox $c="#2a9aa0"><Spark kind={8} /></RailBox></RailSlot>
    <RailSlot $h={46}><RailBox><Spark kind={9} /></RailBox></RailSlot>
    <RailSlot $h={18}><RailRule /></RailSlot>
    <RailSlot $h={46}><RailBox><Spark kind={10} /></RailBox></RailSlot>
    <RailSlot $h={34}><b>R5</b></RailSlot>
    <RailSlot $h={46} $pad={11}><svg width="26" height="30" viewBox="0 0 26 34"><path d="M24 8C16 2 4 4 4 11C4 20 24 16 24 25C24 32 10 33 2 27" fill="none" stroke="#c83030" strokeWidth="6" /></svg></RailSlot>
    <RailSlot $h={46} $pad={8}><svg width="28" height="34" viewBox="0 0 28 34"><path d="M14 1L28 17L14 33L0 17Z" fill="#2266cc" /><path d="M14 9V25M6 17H22" stroke="#fff" strokeWidth="3" /></svg></RailSlot>
    <RailSlot $h={46} $pad={8}><svg width="28" height="36" viewBox="0 0 28 36"><path d="M2 34L6 22L22 2L30 10L12 30Z" fill="#e0a030" stroke="#7a5a20" strokeWidth="1" /></svg></RailSlot>
    <RailSlot $h={16}><RailRule /></RailSlot>
    <RailSlot $h={46}><RailBox><Spark kind={5} /></RailBox></RailSlot>
    <RailSlot $h={46}><RailBox><Spark kind={11} /></RailBox></RailSlot>
    {RAIL_TEXT.map(([t, h, pad]) => <RailSlot key={t} $h={h} $pad={pad}>{t}</RailSlot>)}
    <RailSlot $h={43} $on $pad={14}>日线</RailSlot>
    <RailSlot $h={50} $pad={11}>周线</RailSlot>
    {['月线', 'M', '多', '季', '年'].map(t => <RailSlot key={t} $h={46} $pad={12}>{t}</RailSlot>)}
  </Rail>
);

/* ---------- page data ---------- */
const PERIODS = ['分时', '5分钟', '15分钟', '30分钟', '60分钟', '日线', '周线', '月线', '半天', '多周期', '更多〉'];
const TOOLS = ['复权', '叠加', '历史', '统计', '画线', 'F10', '标记', '+自选', '返回'];
const INFO: [string, string?, number?][] = [
  ['2020/09/28/一', undefined, 1], ['开6.40', RED], ['高7.51', RED], ['低6.28', RED], ['收7.44', RED], ['量427584', OLIVE], ['额3.04亿'],
  ['幅1.18(18.85%)', RED], ['换20.40%'], ['流通2.10亿'], ['通信设备', OLIVE],
];
const BIDS: [string, string, string][] = [['买一', '9.58', '42309'], ['买二', '9.57', '17'], ['买三', '9.56', '259'], ['买四', '9.55', '94'], ['买五', '9.54', '19']];
const STATS1: [string, string, string, string, string, string][] = [
  ['涨停', '9.58', RED, '跌停', '6.38', GREEN],
  ['最高', '9.58', RED, '量比', '1.23', RED],
  ['最低', '7.83', GREEN, '市值', '30.7亿', GREY],
  ['现量', '541', '#a010d0', '总量', '492205', GREY],
  ['外盘', '159473', RED, '内盘', '332732', GREEN],
];
const TRADES: [string, string, string, string][] = [
  ['14:54', '2', 'S', '1'], ['14:54', '5', 'S', '1'], ['14:54', '7', 'S', '1'], ['14:54', '5', 'S', '1'], ['14:55', '1', 'S', '1'], ['14:55', '5', 'S', '1'],
  ['14:55', '10', 'S', '1'], ['14:55', '10', 'S', '1'], ['14:56', '1', 'S', '1'], ['14:56', '7', 'S', '1'], ['14:56', '20', 'S', '1'], ['14:56', '40', 'S', '1'],
  ['14:56', '3', 'S', '1'], ['14:56', '50', 'S', '1'], ['15:00', '541', '', '29'], ['15:05', '16', 'P', '2'], ['15:12', '5', 'P', '1'],
];
const TABS_A: [string, number, string?][] = [['指标A', 70], ['指标B', 72], ['模 板', 73], ['管理', 61, '#55eeee'], ['另存为', 88], ['绑定到', 88], ['MACD基本', 138]];
const TABS_B: [string, number, string?][] = [['扩展^', 78], ['关联报价', 112], ['交易查询', 112], ['综合资讯', 112, OLIVE], ['行业资讯', 112, OLIVE]];
const SIDE_TABS = ['笔', '价', '细', '势', '联', '值', '主', '筹'];
const STATUS: [string, number, string?][] = [
  ['上证', 15], ['3358.47', 9, RED], ['86.39', 27, RED], ['2.64%', 22, RED], ['3557亿', 20], ['沪深', 19], ['4823.16', 8, RED], ['142.02', 18, RED],
  ['3.03%', 17, RED], ['3078亿', 20], ['创业', 20], ['2777.39', 7, RED], ['104.46', 18, RED], ['3.91%', 16, RED], ['2964亿', 20],
];

export default function App() {
  return (
    <Screen>
      <Global />
      <Workspace>
        <ChartColumn>
          <Toolbar>
            <ToolIconCell><PanelGlyph /></ToolIconCell>
            <PeriodGroup>
              {PERIODS.map(p => <Period key={p} $on={p === '日线'}>{p}</Period>)}
            </PeriodGroup>
            <ToolGroup>
              {TOOLS.map(t => <ToolButton key={t} $on={t === '返回'}>{t}</ToolButton>)}
            </ToolGroup>
          </Toolbar>
          <Pane $h={891}>
            <MainChart />
            <HeaderStack>
              <HeaderRow $gap={11}>
                <Seg $ls={1}>邦讯技术(日线)</Seg><Chevron /><Seg>盯妖主图</Seg>
              </HeaderRow>
              <HeaderRow>
                {INFO.map(([t, c, ls]) => <Seg key={t} $c={c} $ls={ls}>{t}</Seg>)}
              </HeaderRow>
            </HeaderStack>
            <DropBadge>跌</DropBadge>
          </Pane>
          <Pane $h={308}>
            <VolumeChart />
            <PaneTitle>
              <Chevron />
              <Seg>VOL-TDX(5,10)</Seg>
              <Seg>VVOL: -</Seg>
              <Seg $c="#f4f400">&nbsp;VOLUME: 427584.47</Seg>
              <Seg $c="#f4f400">MA5: 184659.80</Seg>
              <Seg $c="#e010e0">MA10: 221324.42</Seg>
              <TitleMask />
            </PaneTitle>
          </Pane>
          <Pane $h={300}>
            <MoodChart />
            <PaneTitle $top={0}>
              <Chevron />
              <Seg>市场人气</Seg>
              <Seg>市场人气: 4.49</Seg>
            </PaneTitle>
          </Pane>
          <DateAxis>
            <AxisTicks viewBox="0 0 2113 10">
              {DATE_TICKS.map(x => <rect key={x} x={x} y={0} width={2} height={7} fill="#555" />)}
            </AxisTicks>
            <DateCell $w={268} $bar $pad={5}>2020年</DateCell>
            <DateCell $w={600} $bar>7</DateCell>
            <DateCell $w={549} $bar>8</DateCell>
            <DateCell $w={491}>9</DateCell>
            <DateFlag>2020/09/28/一</DateFlag>
            <AxisCell>日线</AxisCell>
          </DateAxis>
          <TabRow $h={34}>
            {TABS_A.map(([t, w, c]) => <Tab key={t} $w={w} $c={c}>{t}</Tab>)}
            <TabSpacer />
            <Tab $w={49} $s={28} $c="#bbb">+</Tab>
            <Tab $w={53} $s={28} $c="#bbb">-</Tab>
          </TabRow>
          <TabRow $h={36}>
            {TABS_B.map(([t, w, c]) => <Tab key={t} $w={w} $c={c}>{t}</Tab>)}
            <TabSpacer />
            <Tab $w={96} $c={OLIVE}>图文F10</Tab>
            <Tab $w={103} $c={OLIVE}>侧边栏《</Tab>
          </TabRow>
        </ChartColumn>

        <QuotePanel>
          <QuoteHead>
            <HeadLeft>
              <NameLine>邦讯技术<CodeNum>300312</CodeNum></NameLine>
              <PriceLine><BigPrice>9.58</BigPrice><span>1.60</span><span>20.05%</span></PriceLine>
            </HeadLeft>
            <SectorBox>通信设备<SectorPct>2.86%</SectorPct></SectorBox>
          </QuoteHead>
          <QuoteSection $h={182} $pad={2} $accent>
            {['卖五', '卖四', '卖三', '卖二', '卖一'].map(l => <QuoteRow key={l}><div>{l}</div></QuoteRow>)}
          </QuoteSection>
          <QuoteSection $h={185} $pad={3}>
            {BIDS.map(([l, p, q]) => (
              <QuoteRow key={l}><div>{l}</div><RowValue $c={RED}>{p}</RowValue><div /><RowValue $c={OLIVE}>{q}</RowValue></QuoteRow>
            ))}
          </QuoteSection>
          <QuoteSection $h={195} $pad={3}>
            {STATS1.map(([a, b, c, d, e, f]) => (
              <QuoteRow key={a} $h={38}><div>{a}</div><RowValue $c={c} $box={a === '最高'}>{b}</RowValue><RowLabel2>{d}</RowLabel2><RowValue $c={f}>{e}</RowValue></QuoteRow>
            ))}
          </QuoteSection>
          <QuoteSection $h={123} $pad={2}>
            <QuoteRow $h={38}><div>换手</div><RowValue>23.48%</RowValue><RowLabel2>股本</RowLabel2><RowValue>3.20亿</RowValue></QuoteRow>
            <QuoteRow $h={38}><div>净资</div><RowValue>0.07</RowValue><RowLabel2>流通</RowLabel2><RowValue>2.10亿</RowValue></QuoteRow>
            <QuoteRow $h={38}><div>收益<NarrowParen>(二)</NarrowParen></div><RowValue>-0.218</RowValue><RowLabel2>PE(动)</RowLabel2><RowValue $inset={25}>--</RowValue></QuoteRow>
          </QuoteSection>
          <QuoteSection $h={80} $pad={1}>
            <StatusLine>交易状态: 闭市阶段</StatusLine>
            <StatusLine><span>盘后交易量 21 额 2.0万</span><BarsBadge /></StatusLine>
          </QuoteSection>
          <QuoteSection $h={83} $pad={1}>
            <FlowRow><div>净流入额</div><FlowBar $w={108} /><FlowValue>-1.70亿 -38%</FlowValue></FlowRow>
            <FlowRow><div>大宗流入</div><FlowBar $w={64} /><FlowValue>-1.01亿 -23%</FlowValue></FlowRow>
          </QuoteSection>
          {TRADES.map(([t, v, f, n], i) => (
            <TradeRow key={i}>
              <div>{t}</div>
              <TradeVol $c={RED}>9.58</TradeVol>
              <TradeVol $c={v === '541' ? '#a010d0' : OLIVE}>{v}</TradeVol>
              <TradeFlag $c={f === 'S' ? GREEN : GREY}>{f}</TradeFlag>
              <TradeVol $c={n === '1' ? '#8a8a8a' : '#a0a0a0'}>{n}</TradeVol>
            </TradeRow>
          ))}
          <TabRow $h={36} style={{ marginTop: 'auto' }}>
            {SIDE_TABS.map((t, i) => <Tab key={t} $w={58} $c={i === 0 ? '#55eeee' : '#aaa'}>{t}</Tab>)}
          </TabRow>
        </QuotePanel>
        <RailSide />
      </Workspace>

      <StatusBar>
        <StatusDot>︽</StatusDot>
        {STATUS.map(([t, ml, c]) => <StatusItem key={t} $ml={ml} $c={c}>{t}</StatusItem>)}
        <MiniBlocks />
        <LineBadge>2</LineBadge>
        <StatusItem $ml={11}>已连接</StatusItem>
        <TrayIcons />
      </StatusBar>

      <Taskbar>
        <TaskSlot $w={90}><FaWindows size={34} /></TaskSlot>
        <TaskSlot $w={100}><TaskView /></TaskSlot>
        <TaskSlot $w={79} $ml={13} $ul><FaEdgeLegacy size={44} color="#0f78d4" /></TaskSlot>
        <TaskSlot $w={79} $ml={17}><Folder /></TaskSlot>
        <TaskSlot $w={96} $ml={12} $on $ul>
          <AppIcon>平安<br />证券<AppFoot>PINGAN</AppFoot></AppIcon>
        </TaskSlot>
        <Watermark>
          <WatermarkCn>公式指标网</WatermarkCn>
          <BrandLogo />
          <WatermarkUrl>www.9m8.cn</WatermarkUrl>
        </Watermark>
      </Taskbar>
    </Screen>
  );
}
